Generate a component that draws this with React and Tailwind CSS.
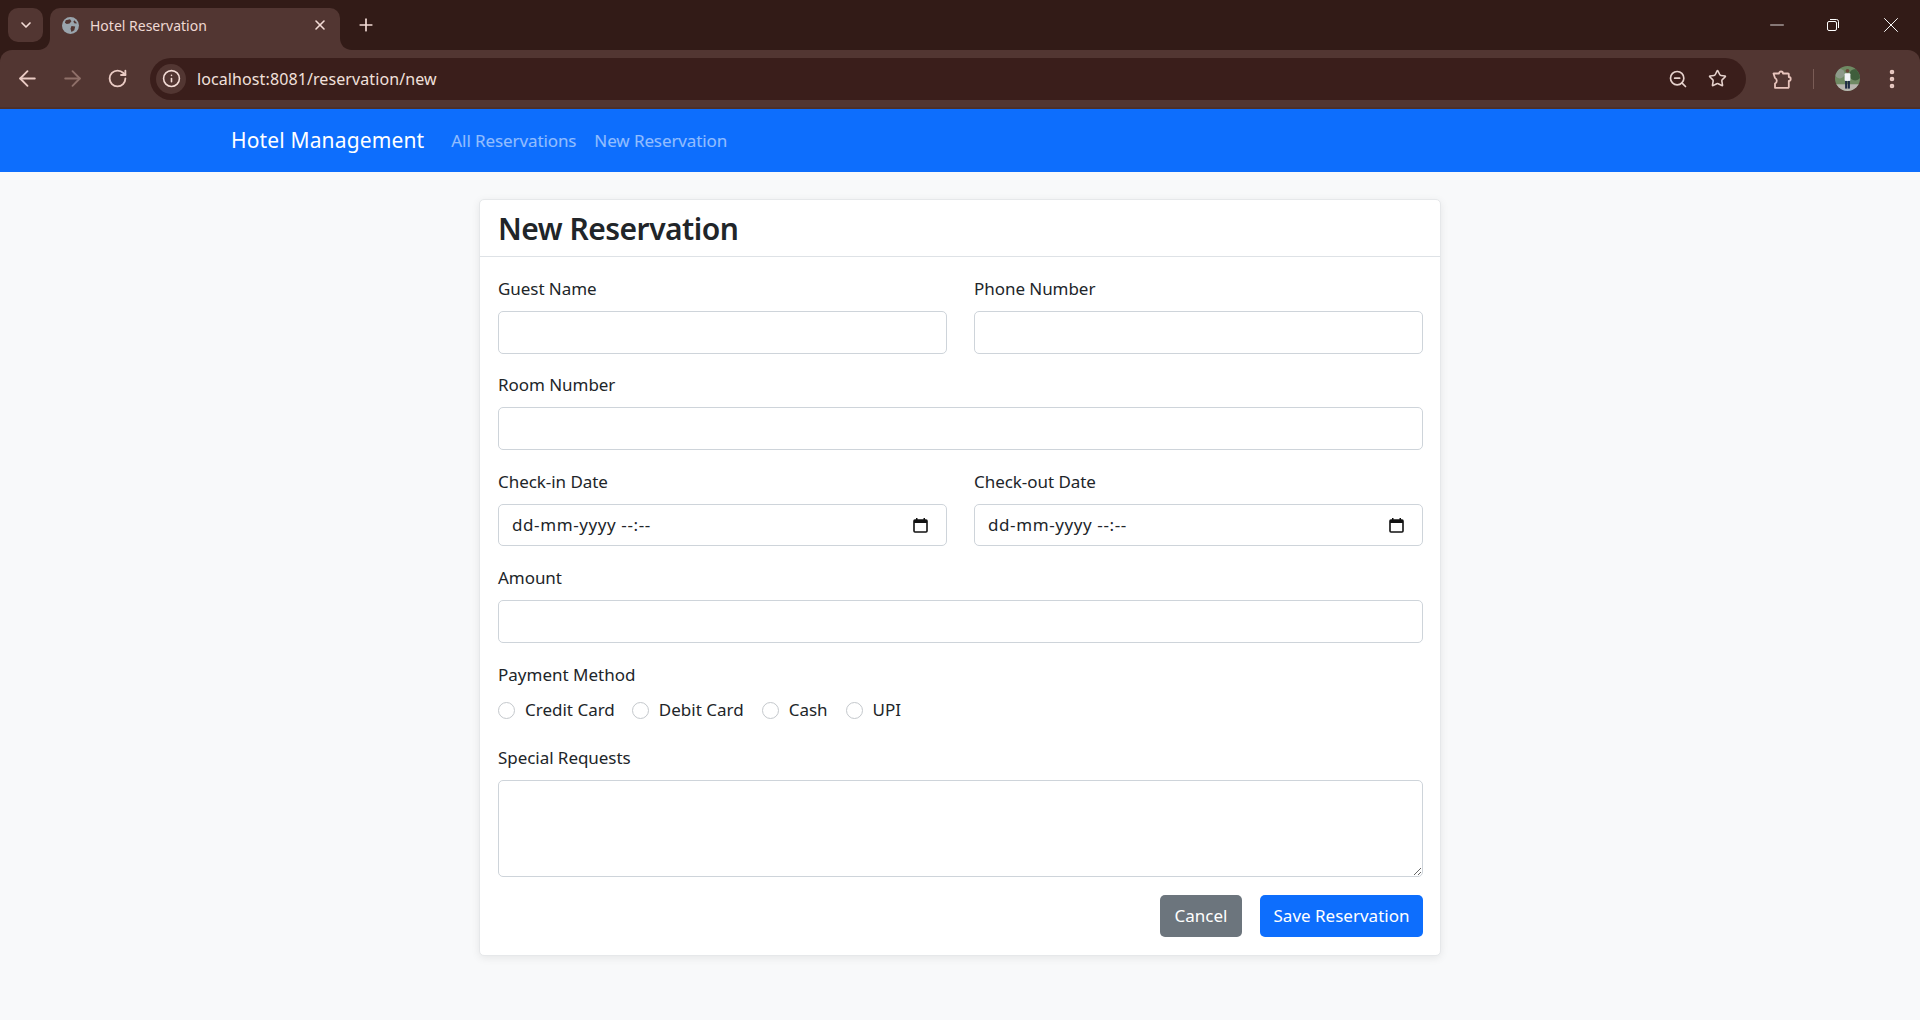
// App.jsx - Hotel reservation form inside a browser window
import { ArrowLeft, ArrowRight, RotateCw, Info, ZoomOut, Star, EllipsisVertical, ChevronDown, X, Plus, Minus } from "lucide-react";

const font = "font-['Noto_Sans','Open_Sans',sans-serif]";

function TabFlare({ side }) {
  // small inverted corners at the bottom of the active tab
  return (
    <svg
      width="12"
      height="12"
      viewBox="0 0 12 12"
      className={side === "left" ? "absolute bottom-0 -left-3" : "absolute bottom-0 -right-3"}
    >
      {side === "left" ? (
        <path d="M12 0V12H0C7 12 12 7 12 0Z" fill="#523632" />
      ) : (
        <path d="M0 0V12H12C5 12 0 7 0 0Z" fill="#523632" />
      )}
    </svg>
  );
}

function GlobeIcon() {
  return (
    <svg width="17" height="17" viewBox="0 0 18 18">
      <circle cx="9" cy="9" r="9" fill="#9aa5ad" />
      <path d="M4 3.5 8.5 2.5 10 4.5 8 7 5 7.5 3 6ZM10 9.5 14 10 13 14 10 16 9 12.5ZM13 3.5 16 6.5 13.5 7 12 5Z" fill="#523632" />
    </svg>
  );
}

function PuzzleIcon() {
  return (
    <svg width="20" height="20" viewBox="0 0 20 20" fill="none" stroke="#e8c4bc" strokeWidth="1.8" strokeLinejoin="round">
      <path d="M1.5 4.5H7a2 2 0 0 1 4 0H16a.8.8 0 0 1 .8.8V8a1.9 1.9 0 0 1 0 3.8V18a.8.8 0 0 1-.8.8H3V14.5a3 3 0 0 0 0-5.5Z" />
    </svg>
  );
}

function Avatar() {
  return (
    <svg width="25" height="25" viewBox="0 0 26 26" className="rounded-full">
      <rect width="26" height="26" fill="#6f8a63" />
      <circle cx="5" cy="8" r="5" fill="#8d9a8a" />
      <circle cx="21" cy="9" r="6" fill="#3f5e3c" />
      <rect y="19" width="26" height="7" fill="#b9b6b0" />
      <circle cx="13" cy="5" r="2" fill="#6b4a3a" />
      <rect x="10" y="7.5" width="6" height="8" rx="1" fill="#f2f5f8" />
      <rect x="10.5" y="15.5" width="2.2" height="8" fill="#1f2c45" />
      <rect x="13.3" y="15.5" width="2.2" height="8" fill="#1f2c45" />
    </svg>
  );
}

function CalendarIcon() {
  return (
    <svg width="15" height="16" viewBox="0 0 15 16">
      <rect x="1" y="3" width="13" height="12" rx="1" fill="none" stroke="#111" strokeWidth="1.6" />
      <rect x="1" y="3" width="13" height="3" fill="#111" />
      <rect x="3" y="1" width="1.5" height="2" fill="#111" />
      <rect x="10.5" y="1" width="1.5" height="2" fill="#111" />
    </svg>
  );
}

function BrowserChrome() {
  return (
    <div className="bg-[#321b17]">
      <div className="h-[50px] flex items-end pl-2 relative">
        <div className="w-[35px] h-[34px] mb-2 rounded-[10px] bg-[#523632] flex items-center justify-center text-[#f3dcd6]">
          <ChevronDown size={16} strokeWidth={2.5} />
        </div>
        <div className="relative ml-[7px] w-[290px] h-[42px] rounded-t-[10px] bg-[#523632] flex items-center pl-[12px] pr-[12px] pb-[8px]">
          <TabFlare side="left" />
          <TabFlare side="right" />
          <GlobeIcon />
          <span className="ml-[11px] flex-1 text-[14px] text-[#efd9d3] font-['Noto_Sans',sans-serif]">Hotel Reservation</span>
          <X size={16} strokeWidth={2.4} className="text-[#f3dcd6]" />
        </div>
        <Plus size={20} strokeWidth={2} className="ml-[16px] mb-[15px] text-[#f3dcd6]" />
        <div className="ml-auto flex items-center h-full text-white self-start">
          <Minus size={22} strokeWidth={0.9} className="mr-[38px]" />
          <svg width="14" height="14" viewBox="0 0 14 14" className="mr-[38px]" fill="none" stroke="#fff">
            <rect x="1.5" y="3.5" width="9" height="9" rx="1.5" />
            <path d="M4 1.5h6.5a2 2 0 0 1 2 2V10" />
          </svg>
          <X size={26} strokeWidth={0.9} className="mr-[16px]" />
        </div>
      </div>
      <div className="h-[59px] bg-[#523632] rounded-t-[12px] border-b-2 border-[#4c302c] flex items-center pl-[15px] pr-[16px] text-[#eacbc4]">
        <ArrowLeft size={25} strokeWidth={1.8} />
        <ArrowRight size={25} strokeWidth={1.8} className="ml-[20px] text-[#8f7069]" />
        <RotateCw size={21} strokeWidth={2.1} className="ml-[22px]" />
        <div className="ml-[22px] flex-1 h-[42px] rounded-full bg-[#3a1e1b] flex items-center pl-[6px] pr-[19px]">
          <div className="w-[30px] h-[30px] rounded-full bg-[#523632] flex items-center justify-center">
            <Info size={19} strokeWidth={2} className="text-[#f3dcd6]" />
          </div>
          <span className="ml-[11px] flex-1 text-[16px] text-[#f1e0dc] font-['Noto_Sans',sans-serif] tracking-[0.1px]">localhost:8081/reservation/new</span>
          <ZoomOut size={20} strokeWidth={2} className="text-[#e6d2cd] mr-[20px]" />
          <Star size={19} strokeWidth={2} className="text-[#e6d2cd]" />
        </div>
        <div className="ml-[26px]"><PuzzleIcon /></div>
        <div className="ml-[21px] w-px h-[20px] bg-[#7a5c56]" />
        <div className="ml-[21px]"><Avatar /></div>
        <EllipsisVertical size={24} strokeWidth={2.6} className="ml-[20px]" />
      </div>
    </div>
  );
}

function Field({ label, className, children }) {
  return (
    <div className={className}>
      <label className="block h-[24px] leading-[24px] mb-[10px] text-[17px] text-[#212529] tracking-[-0.05px]">{label}</label>
      {children}
    </div>
  );
}

function TextInput() {
  return <input type="text" className="block w-full h-[43px] rounded-[5px] border border-[#ced4da] bg-white" />;
}

function DateInput() {
  return (
    <div className="w-full h-[42px] rounded-[5px] border border-[#ced4da] bg-white flex items-center justify-between pl-[13px] pr-[18px]">
      <span className="text-[17px] text-[#212529] tracking-[0.6px]">dd-mm-yyyy --:--</span>
      <CalendarIcon />
    </div>
  );
}

function Radio({ label, className = "" }) {
  return (
    <label className={`flex items-center gap-[10px] text-[17px] text-[#212529] ${className}`}>
      <input type="radio" name="payment" className="appearance-none w-[17px] h-[17px] rounded-full border border-[#c4c8cc] bg-white" />
      {label}
    </label>
  );
}

export default function App() {
  return (
    <div className={`min-h-[1020px] bg-[#f8f9fa] ${font}`}>
      <BrowserChrome />

      {/* Navbar */}
      <nav className="h-[63px] bg-[#0d6efd] flex items-center pl-[231px]">
        <span className="text-[21px] text-white tracking-[0.15px]">Hotel Management</span>
        <span className="ml-[27px] text-[17px] text-white/55 tracking-[-0.1px]">All Reservations</span>
        <span className="ml-[18px] text-[17px] text-white/55 tracking-[-0.1px]">New Reservation</span>
      </nav>

      {/* Card */}
      <div className="w-[962px] mx-auto mt-[27px] bg-white rounded-[5px] border border-[#e6e8ea] shadow-[0_2px_8px_rgba(0,0,0,0.08)]">
        <div className="h-[57px] border-b border-[#dee2e6] pl-[18px] flex items-center">
          <h1 className="text-[30px] font-semibold text-[#212529] tracking-[-0.5px]">New Reservation</h1>
        </div>
        <form className="pl-[18px] pr-[17px] pt-[20px] pb-[18px]">
          <div className="grid grid-cols-2 gap-x-[27px]">
            <Field label="Guest Name"><TextInput /></Field>
            <Field label="Phone Number"><TextInput /></Field>
          </div>
          <Field label="Room Number" className="mt-[19px]"><TextInput /></Field>
          <div className="grid grid-cols-2 gap-x-[27px] mt-[20px]">
            <Field label="Check-in Date"><DateInput /></Field>
            <Field label="Check-out Date"><DateInput /></Field>
          </div>
          <Field label="Amount" className="mt-[20px]"><TextInput /></Field>

          <div className="mt-[20px]">
            <div className="h-[24px] leading-[24px] text-[17px] text-[#212529]">Payment Method</div>
            <div className="flex items-center h-[24px] mt-[11px]">
              <Radio label="Credit Card" />
              <Radio label="Debit Card" className="ml-[17px]" />
              <Radio label="Cash" className="ml-[18px]" />
              <Radio label="UPI" className="ml-[18px]" />
            </div>
          </div>

          <Field label="Special Requests" className="mt-[24px]">
            <textarea className="block w-full h-[97px] rounded-[5px] border border-[#ced4da] bg-white" />
          </Field>

          <div className="flex justify-end gap-[18px] mt-[18px]">
            <button type="button" className="w-[82px] h-[42px] rounded-[5px] bg-[#6c757d] text-white text-[17px]">Cancel</button>
            <button type="submit" className="w-[163px] h-[42px] rounded-[5px] bg-[#0d6efd] text-white text-[17px]">Save Reservation</button>
          </div>
        </form>
      </div>
    </div>
  );
}
